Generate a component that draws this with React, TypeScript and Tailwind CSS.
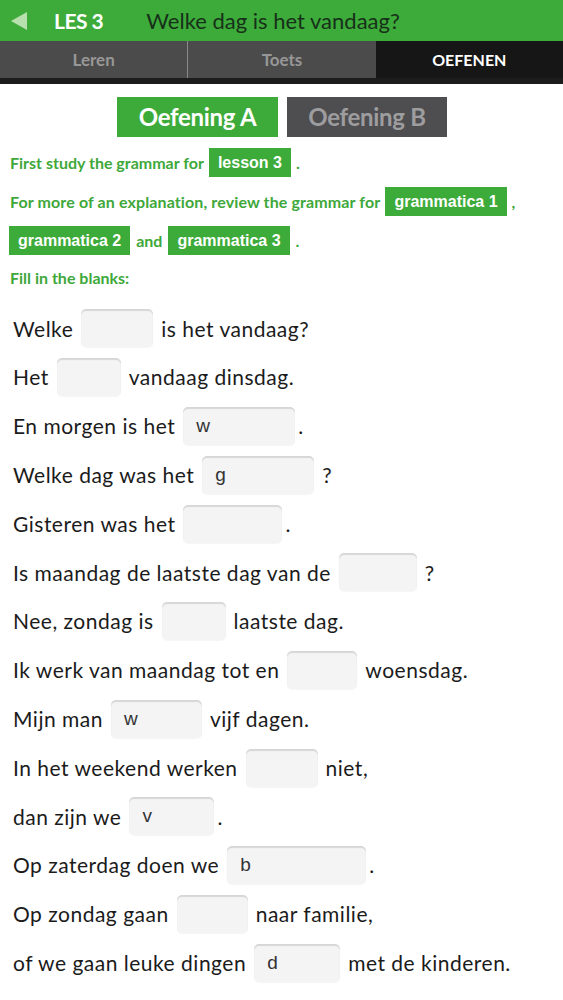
import React from "react";

const green = "bg-[#3dab39]";

type Part = string | { box: number; hint?: string };

const sentences: Part[][] = [
  ["Welke", { box: 72 }, "is het vandaag?"],
  ["Het", { box: 64 }, "vandaag dinsdag."],
  ["En morgen is het", { box: 112, hint: "w" }, "."],
  ["Welke dag was het", { box: 112, hint: "g" }, "?"],
  ["Gisteren was het", { box: 99 }, "."],
  ["Is maandag de laatste dag van de", { box: 78 }, "?"],
  ["Nee, zondag is", { box: 64 }, "laatste dag."],
  ["Ik werk van maandag tot en", { box: 70 }, "woensdag."],
  ["Mijn man", { box: 91, hint: "w" }, "vijf dagen."],
  ["In het weekend werken", { box: 72 }, "niet,"],
  ["dan zijn we", { box: 85, hint: "v" }, "."],
  ["Op zaterdag doen we", { box: 139, hint: "b" }, "."],
  ["Op zondag gaan", { box: 71 }, "naar familie,"],
  ["of we gaan leuke dingen", { box: 86, hint: "d" }, "met de kinderen."],
];

function Chip({ children }: { children: React.ReactNode }) {
  return (
    <span
      className={`${green} inline-flex h-[29px] items-center px-[9px] text-[16px] font-bold text-white`}
      style={{ fontFamily: "'Liberation Sans', Arial, sans-serif" }}
    >
      {children}
    </span>
  );
}

function Blank({ width, hint }: { width: number; hint?: string }) {
  return (
    <span
      className="flex h-[38px] items-center rounded-[5px] bg-[#f4f4f5] pl-[13px] text-[19px] tracking-normal text-[#333] shadow-[inset_0_2px_1px_rgba(0,0,0,0.12),0_1px_1px_rgba(0,0,0,0.04)]"
      style={{ width, fontFamily: "'Liberation Sans', Arial, sans-serif" }}
    >
      {hint}
    </span>
  );
}

export default function App() {
  return (
    <div className="min-h-[1000px] w-[563px] bg-white" style={{ fontFamily: "Lato, 'Noto Sans', sans-serif" }}>
      {/* Title bar */}
      <header className={`${green} flex h-[41px] items-center`}>
        <svg width="18" height="20" viewBox="0 0 18 20" className="ml-[10px]">
          <polygon points="17,1 17,19 1,10" fill="#b8dfae" />
        </svg>
        <span className="ml-[26px] text-[21px] font-bold tracking-[-0.5px] text-white">LES 3</span>
        <span className="ml-[43px] text-[22px] text-[#17301a]">Welke dag is het vandaag?</span>
      </header>

      {/* Tabs */}
      <nav className="flex h-[43px] border-b-[6px] border-[#1c1c1c] bg-[#4b4b4b] text-[17px] font-bold">
        <div className="flex flex-1 items-center justify-center border-r border-[#8a8a8a] text-[#979797]">Leren</div>
        <div className="flex flex-1 items-center justify-center text-[#979797]">Toets</div>
        <div className="flex flex-1 items-center justify-center bg-[#161616] text-[16px] text-white">OEFENEN</div>
      </nav>

      {/* Exercise switch */}
      <div className="mt-[13px] flex justify-center gap-[9px] pl-[1px]">
        <button className={`${green} h-[40px] w-[161px] text-[24px] font-bold tracking-[-0.3px] text-white`}>Oefening A</button>
        <button className="h-[40px] w-[160px] bg-[#4e4d50] text-[24px] font-bold tracking-[-0.3px] text-[#9d9d9f]">Oefening B</button>
      </div>

      {/* Instructions */}
      <div className="mt-[6px] pl-[10px] text-[16px] font-bold text-[#3ea83a]">
        <div className="flex h-[39px] items-center gap-[5px]">
          <span>First study the grammar for</span>
          <Chip>lesson 3</Chip>
          <span>.</span>
        </div>
        <div className="flex h-[39px] items-center gap-[5px]">
          <span className="tracking-[0.12px]">For more of an explanation, review the grammar for</span>
          <Chip>grammatica 1</Chip>
          <span>,</span>
        </div>
        <div className="-ml-[1px] flex h-[39px] items-center gap-[6px]">
          <Chip>grammatica 2</Chip>
          <span>and</span>
          <Chip>grammatica 3</Chip>
          <span>.</span>
        </div>
        <div className="flex h-[36px] items-center">Fill in the blanks:</div>
      </div>

      {/* Sentences */}
      <div className="mt-[8px] pl-[13px] text-[21px] tracking-[0.5px] text-[#1b1b1b]">
        {sentences.map((parts, i) => (
          <div key={i} className="flex h-[48.8px] items-center gap-[8px]">
            {parts.map((p, j) =>
              typeof p === "string" ? (
                <span key={j} className={p === "." ? "-ml-[5px]" : ""}>
                  {p}
                </span>
              ) : (
                <Blank key={j} width={p.box} hint={p.hint} />
              )
            )}
          </div>
        ))}
      </div>
    </div>
  );
}
